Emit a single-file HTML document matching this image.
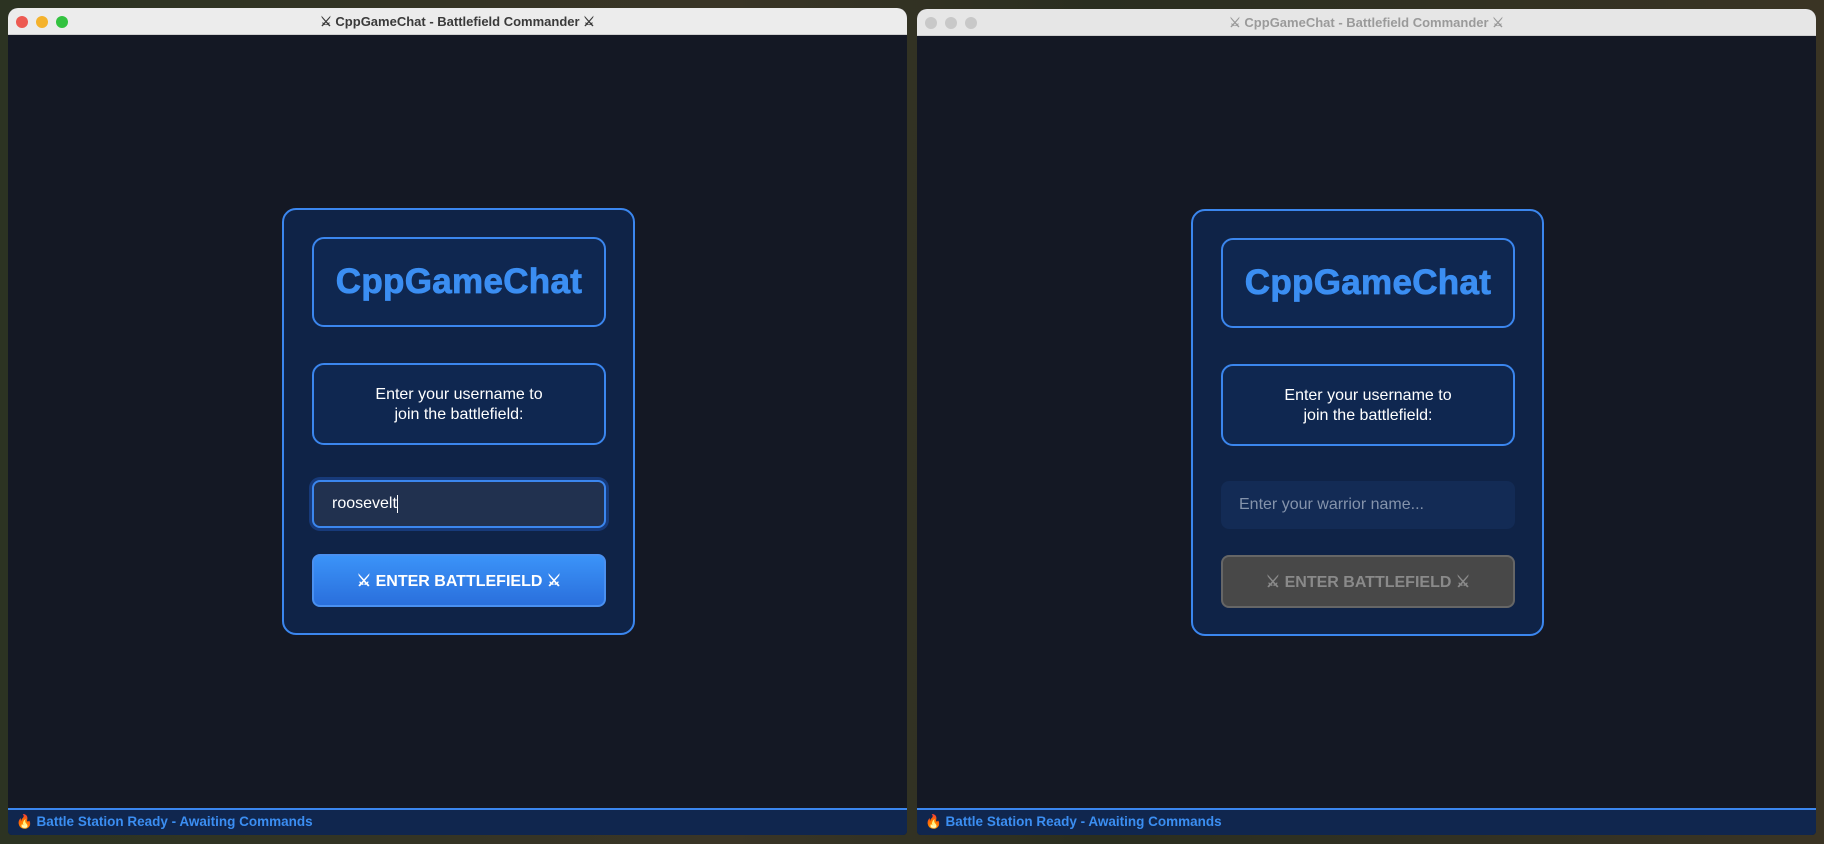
<!DOCTYPE html>
<html><head><meta charset="utf-8"><style>
*{box-sizing:border-box;margin:0;padding:0}
body{width:1824px;height:844px;overflow:hidden;position:relative;background:linear-gradient(90deg,#2c3322 0%,#3a3526 40%,#2a2e20 60%,#3a3424 100%);font-family:"Liberation Sans",sans-serif}
.win{position:absolute;top:8px;width:899px;height:827px;background:#141824;border-radius:10px 10px 4px 4px;overflow:hidden}
.tb{position:absolute;left:0;top:0;right:0;height:27px;background:#ececec;border-bottom:1px solid #cfcfcf;text-align:center;font-size:13px;font-weight:bold;line-height:27px;color:#3a3a3a}
.dot{position:absolute;top:8px;width:12px;height:12px;border-radius:50%}
.card{position:absolute;left:274px;top:200px;width:353px;height:427px;background:#0f2347;border:2px solid #3b86ee;border-radius:14px}
.box{position:absolute;left:28px;width:294px;border:2px solid #3b86ee;border-radius:12px;background:#0f2750;color:#fff;text-align:center}
.logo{top:27px;height:90px;font-size:35px;font-weight:bold;color:#3b8ef2;line-height:86px;letter-spacing:0.3px;-webkit-text-stroke:0.8px #3b8ef2}
.msg{top:153px;height:82px;font-size:16px;line-height:20px;padding-top:20px}
.inp{position:absolute;left:28px;top:270px;width:294px;height:48px;border-radius:8px;font-size:16px;line-height:44px;padding-left:18px}
.btn{position:absolute;left:28px;top:344px;width:294px;height:53px;border-radius:8px;font-size:16px;font-weight:bold;text-align:center;line-height:51px}
.sb{position:absolute;left:0;right:0;bottom:0;height:27px;background:#10264e;border-top:2px solid #3b86ee;font-size:13.5px;font-weight:bold;color:#3b8ef2;line-height:24px;padding-left:8px}
</style></head><body>
<div class="win" style="left:8px">
 <div class="tb"><span class="dot" style="left:8px;background:#ed5a52"></span><span class="dot" style="left:28px;background:#f4b22c"></span><span class="dot" style="left:48px;background:#33c240"></span>⚔ CppGameChat - Battlefield Commander ⚔</div>
 <div class="card" style="top:200px">
  <div class="box logo">CppGameChat</div>
  <div class="box msg">Enter your username to<br>join the battlefield:</div>
  <div class="inp" style="background:#21314f;border:2px solid #3b86ee;box-shadow:0 0 0 3px #173a7a;color:#fff">roosevelt<span style="display:inline-block;width:1px;height:18px;background:#fff;vertical-align:middle"></span></div>
  <div class="btn" style="background:linear-gradient(#3b93f8,#2a6fdc);border:2px solid #4a90f0;color:#fff">⚔ ENTER BATTLEFIELD ⚔</div>
 </div>
 <div class="sb">🔥 Battle Station Ready - Awaiting Commands</div>
</div>
<div class="win" style="left:917px;top:9px;height:826px">
 <div class="tb" style="color:#9a9a9a;background:#e6e6e6"><span class="dot" style="left:8px;background:#c8c8c8"></span><span class="dot" style="left:28px;background:#c8c8c8"></span><span class="dot" style="left:48px;background:#c8c8c8"></span>⚔ CppGameChat - Battlefield Commander ⚔</div>
 <div class="card" style="top:200px">
  <div class="box logo">CppGameChat</div>
  <div class="box msg">Enter your username to<br>join the battlefield:</div>
  <div class="inp" style="background:#132b55;border:none;color:#8493ab;line-height:48px">Enter your warrior name...</div>
  <div class="btn" style="background:#484848;border:2px solid #666;color:#8a8a8a">⚔ ENTER BATTLEFIELD ⚔</div>
 </div>
 <div class="sb">🔥 Battle Station Ready - Awaiting Commands</div>
</div>
</body></html>
